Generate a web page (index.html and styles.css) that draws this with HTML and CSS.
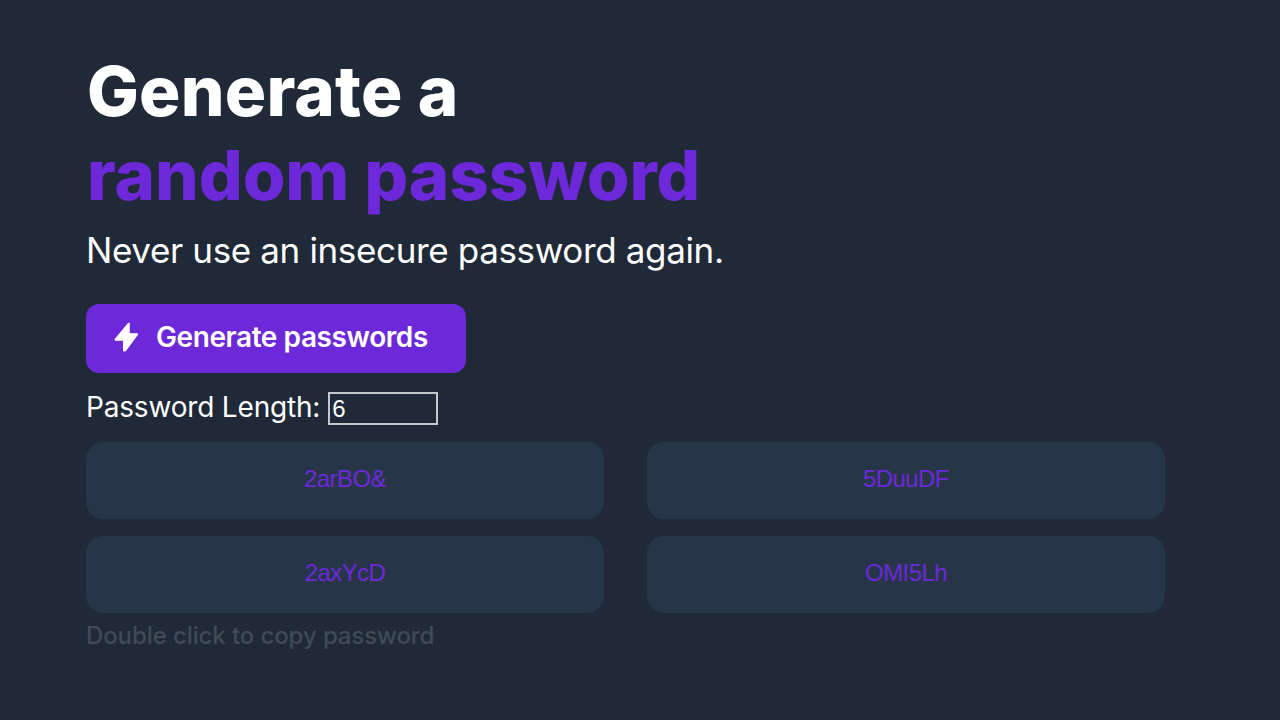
FILE: index.html
```html
<!DOCTYPE html>
<html lang="en">
<head>
<meta charset="utf-8">
<title>Password Generator</title>
<link rel="stylesheet" href="styles.css">
</head>
<body>
<main class="page">
  <h1 class="title">Generate a <span class="title-accent">random password</span></h1>
  <p class="subtitle">Never use an insecure password again.</p>
  <button class="generate" type="button">
    <svg class="bolt" viewBox="0 0 26 32" aria-hidden="true"><path d="M15.5 2 2 18.2v1h8.5V30h2L24.5 13.7v-1h-8.3V2z" stroke-linejoin="round"/></svg>
    <span>Generate passwords</span>
  </button>
  <div class="length">
    <label for="length">Password Length:</label>
    <input class="length-input" id="length" type="text" value="6">
  </div>
  <section class="passwords">
    <div class="password">2arBO&amp;</div>
    <div class="password">5DuuDF</div>
    <div class="password">2axYcD</div>
    <div class="password">OMI5Lh</div>
  </section>
  <p class="hint">Double click to copy password</p>
</main>
</body>
</html>
```
FILE: styles.css
```css
* { box-sizing: border-box; }
body {
  margin: 0;
  background: #1f2937;
  color: #fff;
  font-family: Inter, sans-serif;
}
.page { width: 1165px; height: 720px; padding: 49px 0 0 86px; overflow: hidden; }
.title { margin: 0; padding-left: 1px; font-size: 69px; line-height: 85px; font-weight: 800; letter-spacing: 0.2px; }
.title-accent { display: block; margin-top: -1px; color: #6d28d9; letter-spacing: -0.1px; }
.subtitle { margin: 11px 0 0; font-size: 35px; line-height: 42px; letter-spacing: -0.36px; }
.generate {
  display: flex;
  align-items: center;
  gap: 17px;
  width: 380px;
  height: 69px;
  margin-top: 33px;
  padding: 0 27px 4px;
  border: 0;
  border-radius: 13px;
  background: #6d28d9;
  color: #fff;
  font: 600 28px/34px Inter, sans-serif;
  letter-spacing: -0.42px;
}
.bolt { width: 26px; height: 32px; fill: #fff; stroke: #fff; stroke-width: 1; }
.length { display: flex; gap: 8px; margin-top: 19px; height: 33px; font-size: 28px; line-height: 31px; letter-spacing: -0.18px; }
.length-input {
  width: 110px;
  height: 33px;
  padding: 1px 2px;
  border: 2px solid #c4c7cb;
  background: transparent;
  color: #fff;
  font: 24px "Liberation Sans", sans-serif;
}
.passwords { display: grid; grid-template-columns: 518px 518px; gap: 17px 43px; margin-top: 17px; }
.password {
  height: 77px;
  border-radius: 17px;
  background: #273549;
  color: #6d28d9;
  font: 24px/74px "Liberation Sans", sans-serif;
  letter-spacing: -0.6px;
  text-align: center;
}
.hint { margin: 8px 0 0; color: #414b57; font-size: 24px; line-height: 29px; font-weight: 500; letter-spacing: -0.1px; }
```
